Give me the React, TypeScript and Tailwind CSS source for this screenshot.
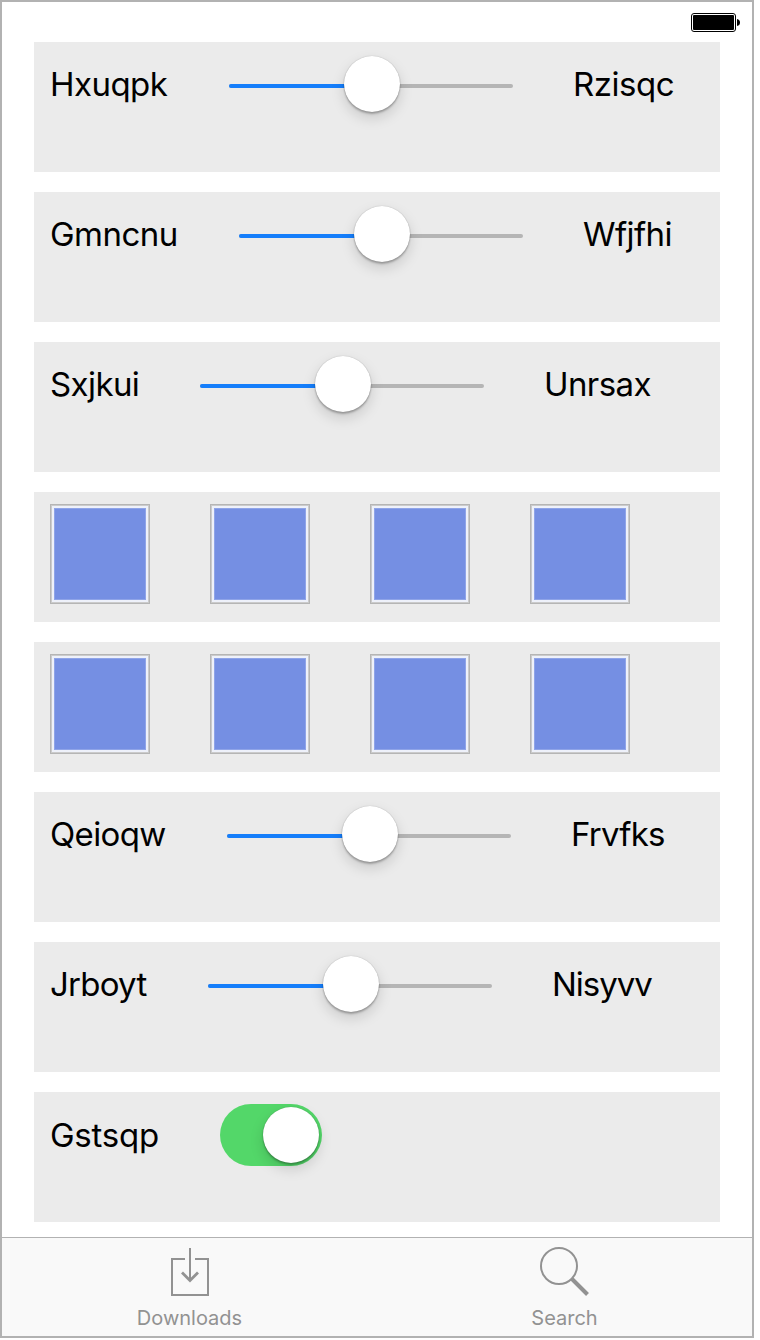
import type { ReactNode } from "react";

function Card({ children }: { children: ReactNode }) {
  return <section className="h-[130px] shrink-0 bg-[#ebebeb] pl-4">{children}</section>;
}

const thumb =
  "h-14 w-14 rounded-full bg-white shadow-[0_0_1px_rgba(0,0,0,0.3),0_2px_2px_rgba(0,0,0,0.25),0_6px_14px_rgba(0,0,0,0.15)]";

type Row = { left: string; right: string; width: string; ls: string; rs: string };

function SliderRow({ left, right, width, ls, rs }: Row) {
  return (
    <Card>
      <div className="flex h-[84px] items-center text-[33px] leading-10 whitespace-nowrap text-black">
        <span className={`${width} ${ls} mr-[60px] shrink-0`}>{left}</span>
        <div className="grid w-[284px] shrink-0 items-center">
          <div className="col-start-1 row-start-1 mt-1 flex h-1 overflow-hidden rounded-full bg-[#b5b5b5]">
            <div className="w-1/2 bg-[#157efb]" />
          </div>
          <div className={`${thumb} z-10 col-start-1 row-start-1 ml-[115px]`} />
        </div>
        <span className={`${rs} ml-[60px]`}>{right}</span>
      </div>
    </Card>
  );
}

function SwatchRow() {
  return (
    <Card>
      <div className="flex gap-[60px] pt-3">
        {[0, 1, 2, 3].map((i) => (
          <div key={i} className="h-[100px] w-[100px] border border-[#b5b5b5] bg-[#cbcbcb] p-px">
            <div className="h-full w-full border-2 border-[#eef1fa] bg-[#758fe3] shadow-[inset_0_0_0_1px_#8fa4e8]" />
          </div>
        ))}
      </div>
    </Card>
  );
}

export default function App() {
  return (
    <main className="flex h-[1338px] w-[754px] flex-col border-2 border-[#b2b2b2] bg-white font-['Inter',sans-serif]">
      <header className="flex h-10 shrink-0 justify-end pt-[11px] pr-[11px]">
        <svg width="50" height="19" viewBox="0 0 50 19">
          <rect x="0.5" y="0.5" width="44" height="18" rx="2.5" fill="white" stroke="black" />
          <rect x="2" y="2" width="41" height="15" rx="1" />
          <path d="M46 6Q49 6.5 49 9.5T46 13Z" />
        </svg>
      </header>
      <div className="flex h-[1195px] shrink-0 flex-col gap-5 px-8">
        <SliderRow left="Hxuqpk" right="Rzisqc" width="w-[119px]" ls="tracking-[-0.55px]" rs="tracking-[-0.45px]" />
        <SliderRow left="Gmncnu" right="Wfjfhi" width="w-[129px]" ls="tracking-[-0.55px]" rs="tracking-[-0.6px]" />
        <SliderRow left="Sxjkui" right="Unrsax" width="w-[90px]" ls="tracking-[-0.6px]" rs="tracking-[-0.6px]" />
        <SwatchRow />
        <SwatchRow />
        <SliderRow left="Qeioqw" right="Frvfks" width="w-[117px]" ls="tracking-[-0.65px]" rs="tracking-[-0.75px]" />
        <SliderRow left="Jrboyt" right="Nisyvv" width="w-[98px]" ls="tracking-[-0.75px]" rs="tracking-[-1px]" />
        <Card>
          <div className="flex gap-[60px] pt-3 text-[33px] leading-10 text-black">
            <span className="mt-[11px] w-[110px] tracking-[-0.25px]">Gstsqp</span>
            <div className="h-[62px] w-[102px] rounded-full bg-[#53d769] pt-[3px] pl-[43px]">
              <div className={thumb} />
            </div>
          </div>
        </Card>
      </div>
      <nav className="grid h-[99px] grid-cols-2 border-t border-[#b2b2b2] bg-[#f9f9f9] text-[20px] leading-6 text-[#929292]">
        <div className="flex flex-col items-center">
          <svg width="50" height="50" viewBox="0 0 50 50" className="mt-[9px]" fill="none" stroke="#929292" strokeWidth="2">
            <path d="M20 12H7V48H43V12H30M25 1V34" />
            <path d="M17 25.5L25 33.5L33 25.5" strokeWidth="2.8" />
          </svg>
          <span className="mt-[9px]">Downloads</span>
        </div>
        <div className="flex flex-col items-center">
          <svg width="50" height="50" viewBox="0 0 50 50" className="mt-[9px]" fill="none" stroke="#929292">
            <circle cx="19" cy="19" r="18" strokeWidth="2" />
            <path d="M32 32L47.5 47.5" strokeWidth="4" />
          </svg>
          <span className="mt-[9px]">Search</span>
        </div>
      </nav>
    </main>
  );
}
